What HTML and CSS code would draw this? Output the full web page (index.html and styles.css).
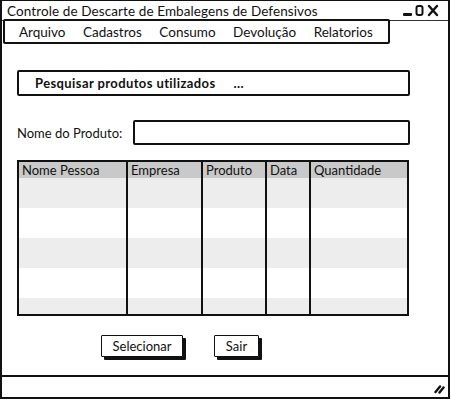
FILE: index.html
```html
<!DOCTYPE html>
<html lang="pt">
<head>
    <meta charset="UTF-8">
    <title>Controle de Descarte de Embalegens de Defensivos</title>
    <link rel="stylesheet" href="styles.css">
</head>
<body>
    <div class="window">
        <div class="title-bar">
            <span class="title">Controle de Descarte de Embalegens de Defensivos</span>
            <svg class="win-controls" width="40" height="14" viewBox="0 0 40 14">
                <rect x="0" y="9" width="9" height="3" rx="1" fill="#111"/>
                <rect x="13.5" y="2" width="6" height="9" rx="2" fill="none" stroke="#111" stroke-width="2"/>
                <path d="M26 2 L34 11 M34 2 L26 11" stroke="#111" stroke-width="2.4" stroke-linecap="round"/>
            </svg>
        </div>

        <div class="menu-bar">
            <span>Arquivo</span>
            <span>Cadastros</span>
            <span>Consumo</span>
            <span>Devolução</span>
            <span>Relatorios</span>
        </div>

        <div class="content">
            <div class="search-box">
                <b>Pesquisar produtos utilizados</b>
                <b class="dots">...</b>
            </div>

            <div class="field-row">
                <label for="produto">Nome do Produto:</label>
                <div class="text-input" id="produto"></div>
            </div>

            <div class="table-wrap">
                <table class="grid">
                    <colgroup>
                        <col style="width: 108px">
                        <col style="width: 75px">
                        <col style="width: 64px">
                        <col style="width: 44px">
                        <col>
                    </colgroup>
                    <tr>
                        <th>Nome Pessoa</th>
                        <th>Empresa</th>
                        <th>Produto</th>
                        <th>Data</th>
                        <th>Quantidade</th>
                    </tr>
                    <tr class="odd"><td></td><td></td><td></td><td></td><td></td></tr>
                    <tr><td></td><td></td><td></td><td></td><td></td></tr>
                    <tr class="odd"><td></td><td></td><td></td><td></td><td></td></tr>
                    <tr><td></td><td></td><td></td><td></td><td></td></tr>
                    <tr class="odd"><td></td><td></td><td></td><td></td><td></td></tr>
                </table>
            </div>

            <div class="buttons">
                <button class="btn btn-wide">Selecionar</button>
                <button class="btn btn-small">Sair</button>
            </div>
        </div>

        <div class="status-bar">
            <svg width="11" height="11" viewBox="0 0 11 11">
                <path d="M1.5 9 L6 3.5 M5.5 9.5 L9.5 4.5" stroke="#111" stroke-width="2.4" stroke-linecap="round"/>
            </svg>
        </div>
    </div>
</body>
</html>
```

FILE: styles.css
```css
body {
    margin: 0;
    background: #fff;
    font-family: Lato, "Liberation Sans", sans-serif;
    font-size: 13px;
    color: #111;
}

.window {
    box-sizing: border-box;
    width: 450px;
    height: 399px;
    border: 2px solid #111;
    border-top-width: 1px;
    display: flex;
    flex-direction: column;
}

.title-bar {
    height: 19px;
    display: flex;
    align-items: center;
    justify-content: space-between;
    padding: 0 5px 0 5px;
    border-bottom: 1px solid #333;
}

.title {
    font-size: 13.5px;
    letter-spacing: 0.1px;
}

.win-controls {
    margin-top: 1px;
}

.menu-bar {
    box-sizing: border-box;
    width: 387px;
    height: 25px;
    margin: -2px 0 0 1px;
    border: 2px solid #111;
    border-radius: 2px;
    display: flex;
    align-items: center;
    gap: 17.5px;
    padding-left: 14px;
    font-size: 13.5px;
    background: #fff;
}

.content {
    flex: 1;
    padding: 26px 38px 0 15px;
}

.search-box {
    box-sizing: border-box;
    height: 26px;
    border: 2px solid #111;
    border-radius: 2px;
    display: flex;
    align-items: center;
    padding-left: 16px;
    font-size: 13px;
    letter-spacing: 0.4px;
}

.search-box .dots {
    margin-left: 18px;
}

.field-row {
    display: flex;
    align-items: center;
    margin-top: 24px;
}

.field-row label {
    width: 116px;
    font-size: 13px;
}

.text-input {
    flex: 1;
    box-sizing: border-box;
    height: 25px;
    border: 2px solid #111;
    border-radius: 2px;
}

.table-wrap {
    box-sizing: border-box;
    margin-top: 15px;
    width: 392px;
    height: 156px;
    border: 2px solid #111;
    overflow: hidden;
}

.grid {
    width: 100%;
    border-collapse: collapse;
    table-layout: fixed;
}

.grid th {
    height: 16px;
    padding: 0 0 0 3px;
    text-align: left;
    font-weight: normal;
    font-size: 13px;
    background: #c9c9c9;
    border-left: 2px solid #111;
    line-height: 16px;
}

.grid td {
    height: 30px;
    padding: 0;
    border-left: 2px solid #111;
}

.grid th:first-child,
.grid td:first-child {
    border-left: none;
}

.grid .odd td {
    background: #ededed;
}

.buttons {
    display: flex;
    gap: 31px;
    margin: 19px 0 0 84px;
}

.btn {
    box-sizing: border-box;
    height: 22px;
    padding: 0 9px;
    background: #fff;
    border: 1.5px solid #111;
    border-radius: 1px;
    box-shadow: 3px 3px 0 #111;
    font-family: Lato, "Liberation Sans", sans-serif;
    font-size: 13px;
    color: #111;
}

.btn-wide {
    width: 82px;
}

.btn-small {
    width: 45px;
}

.status-bar {
    box-sizing: border-box;
    height: 22px;
    border-top: 2px solid #111;
    display: flex;
    align-items: flex-end;
    justify-content: flex-end;
    padding: 0 3px 3px 0;
}
```
